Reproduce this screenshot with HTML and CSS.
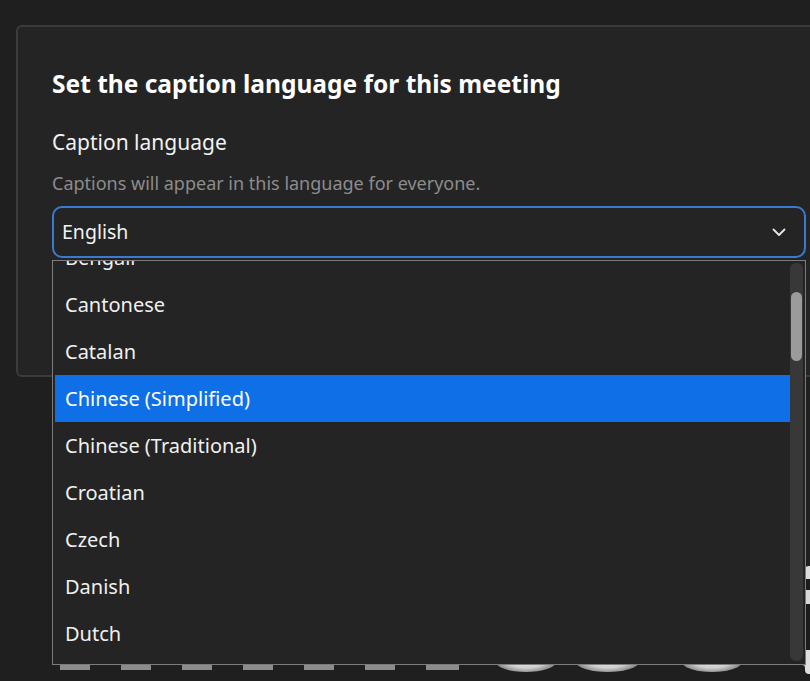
FILE: index.html
```html
<!DOCTYPE html>
<html lang="en">
<head>
<meta charset="utf-8">
<title>Caption language</title>
<link rel="stylesheet" href="styles.css">
</head>
<body>
<div class="stage">
  <section class="dialog">
    <h1 class="title">Set the caption language for this meeting</h1>
    <div class="label">Caption language</div>
    <div class="hint">Captions will appear in this language for everyone.</div>
    <div class="select-wrap">
      <div class="select">
        <span class="value">English</span>
        <svg class="chev" width="14" height="9" viewBox="0 0 14 9"><path d="M1.5 1.5 L7 7 L12.5 1.5" fill="none" stroke="#e8e8e8" stroke-width="1.8" stroke-linecap="round" stroke-linejoin="round"/></svg>
      </div>
      <div class="listbox">
        <ul class="options">
          <li class="opt">Bengali</li>
          <li class="opt">Cantonese</li>
          <li class="opt">Catalan</li>
          <li class="opt active">Chinese (Simplified)</li>
          <li class="opt">Chinese (Traditional)</li>
          <li class="opt">Croatian</li>
          <li class="opt">Czech</li>
          <li class="opt">Danish</li>
          <li class="opt">Dutch</li>
        </ul>
        <div class="scrollbar"><div class="thumb"></div></div>
      </div>
    </div>
  </section>
  <div class="backdrop">
    <span class="dash"></span><span class="dash"></span><span class="dash"></span><span class="dash"></span><span class="dash"></span><span class="dash"></span><span class="dash"></span>
    <span class="blob b1"></span><span class="blob b2"></span><span class="blob b3"></span><span class="blob b4"></span>
  </div>
  <div class="edge"></div>
</div>
</body>
</html>
```
FILE: styles.css
```css
* { box-sizing: border-box; }
html, body { margin: 0; padding: 0; }
body {
  background: #1f1f1f;
  font-family: "Noto Sans", "Open Sans", sans-serif;
  color: #ffffff;
  overflow: hidden;
}
.stage {
  position: relative;
  width: 810px;
  height: 681px;
  overflow: hidden;
  display: flex;
  flex-direction: column;
}
.dialog {
  margin: 25px 0 0 16px;
  width: 830px;
  height: 352px;
  flex: none;
  background: #242424;
  border: 2px solid #3b3b3b;
  border-radius: 6px;
  padding: 42px 0 0 34px;
}
.title {
  margin: 0;
  font-size: 24.5px;
  line-height: 30px;
  font-weight: 700;
  color: #ffffff;
}
.label {
  margin-top: 29px;
  font-size: 21px;
  line-height: 28px;
  color: #f2f2f2;
}
.hint {
  margin-top: 15px;
  font-size: 18px;
  line-height: 24px;
  color: #8c8c8c;
}
.select-wrap {
  position: relative;
  width: 754px;
  margin-top: 11px;
}
.select {
  height: 52px;
  border: 2px solid #3a7ad0;
  border-radius: 10px;
  display: flex;
  align-items: center;
  justify-content: space-between;
  padding: 0 18px 0 8px;
  background: #242424;
}
.value {
  font-size: 19.5px;
  color: #f2f2f2;
  padding-bottom: 2px;
}
.chev { display: block; margin-top: 1px; }
.listbox {
  position: absolute;
  left: 0;
  top: 54px;
  width: 754px;
  height: 405px;
  border: 1px solid #7c7c7c;
  background: #242424;
  overflow: hidden;
  z-index: 5;
  display: flex;
}
.options {
  list-style: none;
  margin: -27px 0 0 0;
  padding: 0 0 0 2px;
  flex: 1;
}
.opt {
  height: 47px;
  display: flex;
  align-items: center;
  padding-left: 10px;
  font-size: 20px;
  color: #f0f0f0;
}
.opt.active { background: #0e6fe6; color: #ffffff; }
.scrollbar {
  width: 13px;
  margin: 2px 2px 3px 0;
  background: #383838;
  border-radius: 6px;
  padding: 29px 1px 0 1px;
  flex: none;
}
.thumb {
  height: 69px;
  background: #9b9b9b;
  border-radius: 6px;
}
.backdrop {
  margin-top: 275px;
  height: 22px;
  display: flex;
  align-items: flex-start;
  padding-left: 60px;
}
.dash {
  width: 30px;
  height: 18px;
  background: #8c8c8c;
  margin-right: 31px;
  flex: none;
}
.dash:nth-child(7) { width: 33px; margin-right: 37px; }
.blob {
  width: 60px;
  height: 20px;
  border-radius: 50%;
  background: radial-gradient(ellipse at 50% 30%, #f0f0f0 0%, #d0d0d0 50%, #8a8a8a 75%, #3a3a3a 100%);
  flex: none;
}
.b1 { margin-right: 20px; }
.b2 { width: 63px; margin-right: 43px; }
.b3 { margin-right: 60px; }
.b4 { width: 40px; }
.edge {
  position: absolute;
  right: 0;
  top: 566px;
  width: 5px;
  height: 108px;
  border-radius: 4px 0 0 4px;
  background: linear-gradient(#dcdcdc 0 12%, #1c1c1c 12% 22%, #d8d8d8 22% 35%, #1c1c1c 35% 78%, #e0e0e0 78%);
}
```
